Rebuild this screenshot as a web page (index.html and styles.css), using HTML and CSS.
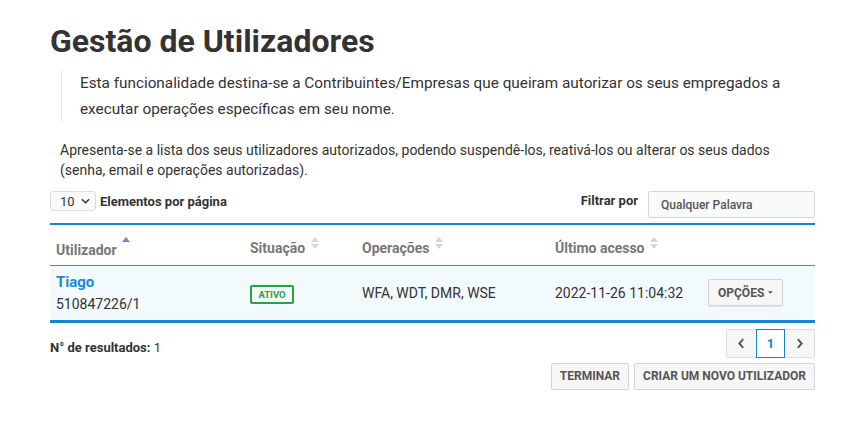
FILE: index.html
```html
<!DOCTYPE html>
<html lang="pt">
<head>
<meta charset="utf-8">
<title>Gestão de Utilizadores</title>
<link rel="stylesheet" href="styles.css">
</head>
<body>
<main class="page">
  <h1 class="title">Gestão de Utilizadores</h1>
  <blockquote class="note">Esta funcionalidade destina-se a Contribuintes/Empresas que queiram autorizar os seus empregados a executar operações específicas em seu nome.</blockquote>
  <p class="intro">Apresenta-se a lista dos seus utilizadores autorizados, podendo suspendê-los, reativá-los ou alterar os seus dados (senha, email e operações autorizadas).</p>

  <div class="toolbar">
    <div class="perpage">
      <span class="select">10 <svg class="chev" viewBox="0 0 10 6" width="9" height="6"><path d="M1 1l4 4 4-4" fill="none" stroke="#333" stroke-width="1.6"/></svg></span>
      <span class="perpage-label">Elementos por página</span>
    </div>
    <div class="filter">
      <span class="filter-label">Filtrar por</span>
      <span class="filter-input">Qualquer Palavra</span>
    </div>
  </div>

  <table class="grid">
    <thead>
      <tr>
        <th class="c1">Utilizador <span class="sort up"><svg viewBox="0 0 8 12" width="8" height="12"><path d="M0 6L4 1 8 6z" fill="#7b7fe0"/></svg></span></th>
        <th class="c2">Situação <span class="sort"><svg viewBox="0 0 8 12" width="8" height="12"><path d="M0 5L4 0 8 5z" fill="#d6d6d6"/><path d="M0 7L4 12 8 7z" fill="#d6d6d6"/></svg></span></th>
        <th class="c3">Operações <span class="sort"><svg viewBox="0 0 8 12" width="8" height="12"><path d="M0 5L4 0 8 5z" fill="#d6d6d6"/><path d="M0 7L4 12 8 7z" fill="#d6d6d6"/></svg></span></th>
        <th class="c4">Último acesso <span class="sort"><svg viewBox="0 0 8 12" width="8" height="12"><path d="M0 5L4 0 8 5z" fill="#d6d6d6"/><path d="M0 7L4 12 8 7z" fill="#d6d6d6"/></svg></span></th>
        <th class="c5"></th>
      </tr>
    </thead>
    <tbody>
      <tr>
        <td class="c1"><a class="name" href="#">Tiago</a><div class="nif">510847226/1</div></td>
        <td class="c2"><span class="badge">ATIVO</span></td>
        <td class="c3">WFA, WDT, DMR, WSE</td>
        <td class="c4">2022-11-26 11:04:32</td>
        <td class="c5"><span class="btn btn-opt">OPÇÕES <svg viewBox="0 0 8 5" width="8" height="5"><path d="M0 0.5h8L4 4.5z" fill="#555"/></svg></span></td>
      </tr>
    </tbody>
  </table>

  <div class="footer">
    <div class="count"><b>N° de resultados:</b> 1</div>
    <div class="pager">
      <span class="pg"><svg viewBox="0 0 8 12" width="7" height="11"><path d="M6 1L1.5 6 6 11" fill="none" stroke="#555" stroke-width="2.2"/></svg></span>
      <span class="pg active">1</span>
      <span class="pg"><svg viewBox="0 0 8 12" width="7" height="11"><path d="M2 1l4.5 5L2 11" fill="none" stroke="#555" stroke-width="2.2"/></svg></span>
    </div>
  </div>
  <div class="actions">
    <span class="btn">TERMINAR</span>
    <span class="btn">CRIAR UM NOVO UTILIZADOR</span>
  </div>
</main>
</body>
</html>
```
FILE: styles.css
```css
* { box-sizing: border-box; }
body {
  margin: 0;
  background: #fff;
  font-family: Roboto, "Liberation Sans", sans-serif;
  color: #333;
}
.page {
  width: 765px;
  margin-left: 50px;
  padding-top: 19px;
}
.title {
  margin: 0;
  font-size: 32px;
  line-height: 44px;
  font-weight: 700;
  color: #333;
}
.note {
  margin: 7px 0 0 11px;
  padding: 0 0 0 18px;
  border-left: 1px solid #e3e3e3;
  font-size: 15.3px;
  line-height: 26px;
  color: #333;
}
.intro {
  margin: 18px 0 0 10px;
  font-size: 14px;
  line-height: 20px;
  color: #333;
}
.toolbar {
  display: flex;
  justify-content: space-between;
  align-items: flex-start;
  margin-top: 11px;
  height: 32px;
}
.perpage { display: flex; align-items: center; gap: 4px; }
.select {
  display: inline-flex;
  align-items: center;
  gap: 6px;
  width: 46px;
  height: 20px;
  padding-left: 9px;
  border: 1px solid #dcdcdc;
  border-radius: 3px;
  background: #fafafa;
  font-size: 13px;
  color: #333;
}
.perpage-label { font-size: 13px; font-weight: 700; color: #333; }
.filter { display: flex; align-items: flex-start; gap: 10px; }
.filter-label { font-size: 13px; font-weight: 700; color: #333; padding-top: 2px; }
.filter-input {
  display: flex;
  align-items: center;
  width: 167px;
  height: 27px;
  padding-left: 12px;
  border: 1px solid #d6d6d6;
  border-radius: 2px;
  background: #fafafa;
  font-size: 12px;
  font-weight: 500;
  color: #555;
}
.grid {
  width: 100%;
  border-collapse: collapse;
  border-top: 2px solid #1686cc;
}
.grid th {
  text-align: left;
  font-size: 14px;
  font-weight: 700;
  color: #777;
  height: 41px;
  padding: 4px 0 0 0;
  border-bottom: 1px solid #2b93d3;
}
.grid th.c1 { padding-left: 6px; }
.sort { display: inline-block; vertical-align: 4px; margin-left: 2px; }
.sort svg { display: block; }
.sort.up { vertical-align: 7px; }
.c1 { width: 200px; }
.c2 { width: 112px; }
.c3 { width: 193px; }
.c4 { width: 154px; }
.grid td {
  background: #f2fafe;
  height: 56px;
  font-size: 14px;
  color: #333;
  vertical-align: middle;
  padding: 0;
  border-bottom: 3px solid #1686cc;
}
.grid td.c1 { padding-left: 6px; padding-top: 4px; }
.name {
  display: block;
  font-size: 15px;
  font-weight: 700;
  color: #1a8bd1;
  text-decoration: none;
  line-height: 20px;
}
.nif { font-size: 14px; line-height: 25px; }
.badge {
  display: inline-flex;
  align-items: center;
  justify-content: center;
  width: 44px;
  height: 19px;
  border: 2px solid #27a33f;
  border-radius: 2px;
  color: #27a33f;
  font-size: 9.5px;
  font-weight: 700;
  margin-top: 3px;
}
.btn {
  display: inline-flex;
  align-items: center;
  gap: 4px;
  height: 27px;
  padding: 0 8px;
  border: 1px solid #d4d4d4;
  border-radius: 2px;
  background: #f6f6f6;
  box-shadow: 0 1px 1px rgba(0,0,0,0.08);
  font-size: 12px;
  font-weight: 700;
  color: #555;
}
.btn-opt { width: 75px; margin-left: -1px; padding: 0 9px; }
.footer {
  display: flex;
  justify-content: space-between;
  align-items: flex-start;
  margin-top: 6px;
}
.count { font-size: 13px; padding-top: 11px; color: #333; }
.count b { font-weight: 700; }
.pager {
  display: flex;
  border: 1px solid #dcdcdc;
  border-radius: 2px;
  background: #f6f6f6;
  height: 29px;
}
.pg {
  display: flex;
  align-items: center;
  justify-content: center;
  width: 29px;
  height: 27px;
  font-size: 13px;
  font-weight: 700;
}
.pg.active {
  background: #fff;
  border: 1px solid #1686cc;
  color: #1686cc;
  height: 29px;
  margin-top: -1px;
}
.actions {
  display: flex;
  justify-content: flex-end;
  gap: 5px;
  margin-top: 5px;
}
```
